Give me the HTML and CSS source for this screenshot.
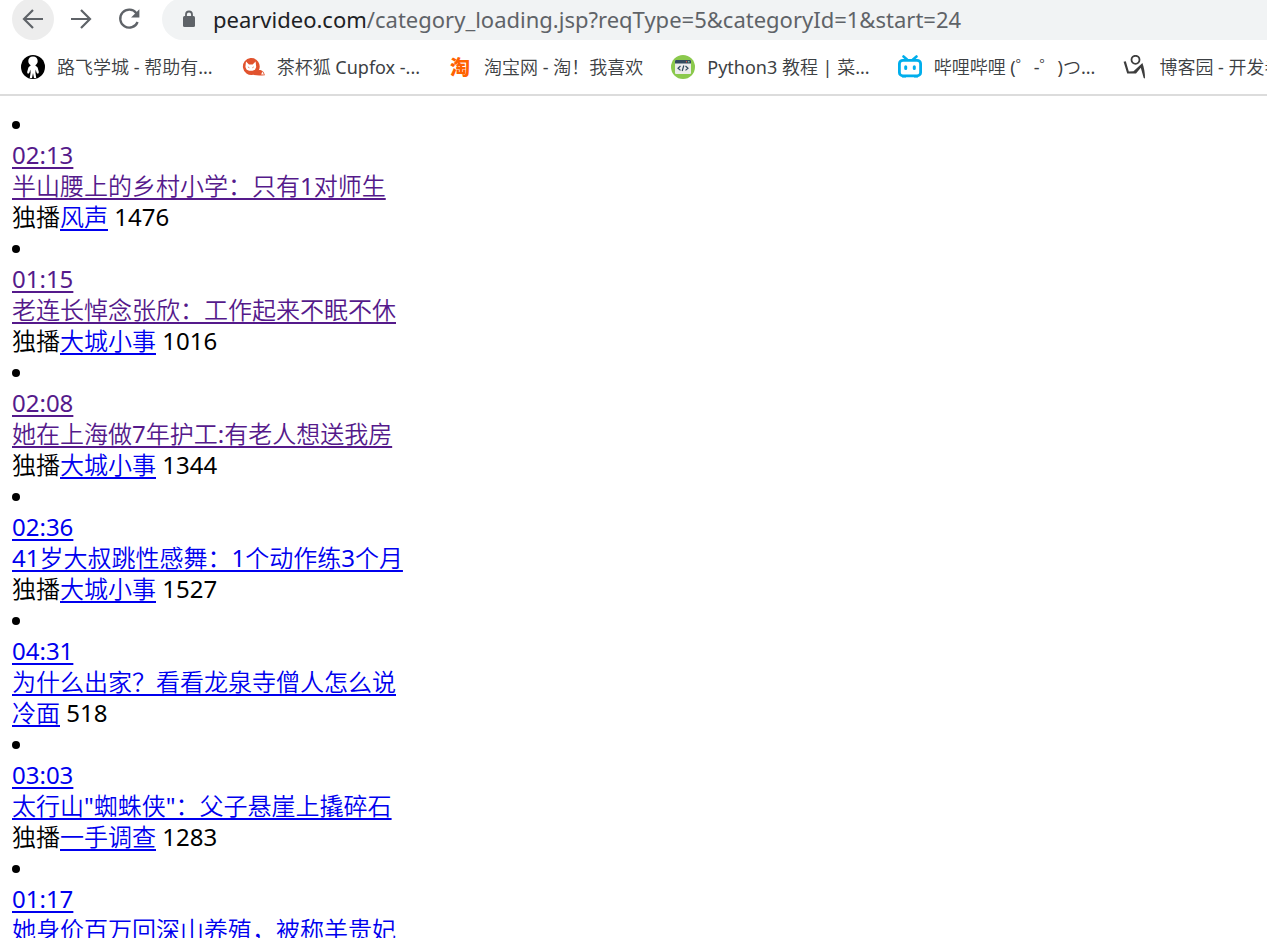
FILE: index.html
```
<!DOCTYPE html>
<html lang="zh-CN">
<head>
<meta charset="utf-8">
<title>pearvideo.com</title>
<link rel="stylesheet" href="styles.css">
</head>
<body>
<header class="browser">
  <div class="toolbar">
    <button class="nav-button nav-button-active" type="button" aria-label="后退">
      <svg width="24" height="24" viewBox="0 0 24 24"><path d="M22 12H3M12 3l-9 9 9 9" fill="none" stroke="#5f6368" stroke-width="2.2"/></svg>
    </button>
    <button class="nav-button" type="button" aria-label="前进">
      <svg width="24" height="24" viewBox="0 0 24 24"><path d="M2 12h19M12 3l9 9-9 9" fill="none" stroke="#5f6368" stroke-width="2.2"/></svg>
    </button>
    <button class="nav-button" type="button" aria-label="重新加载">
      <svg width="24" height="24" viewBox="0 0 24 24"><path d="M19.4 6.2A9 9 0 1 0 20.6 15" fill="none" stroke="#5f6368" stroke-width="2.3"/><path d="M22.4 2.200v8.300h-8.300z" fill="#5f6368"/></svg>
    </button>
    <div class="address">
      <svg class="lock" width="14" height="18" viewBox="0 0 14 18"><rect x="1" y="6" width="12" height="11" rx="1.500" fill="#5f6368"/><path d="M4 7V4.500a3 3 0 0 1 6 0V7" fill="none" stroke="#5f6368" stroke-width="1.800"/></svg>
      <div class="url" role="textbox" contenteditable="true" spellcheck="false" aria-label="地址栏"><span class="host">pearvideo.com</span>/category_loading.jsp?reqType=5&amp;categoryId=1&amp;start=24</div>
    </div>
  </div>
  <nav class="bookmarks" aria-label="书签">
    <a class="bookmark" href="#">
      <svg class="icon" viewBox="0 0 24 24"><circle cx="12" cy="12" r="12" fill="#000"/><path d="M12 1.500c3 0 4.700 2 4.700 4.500 0 2-1 3.600-2.500 4.200l2.400 2.300 1.300 4.700-.9 1.800-1.500-1.500-.8-3-.3 3 .8 5.500H13l-1-5-1 5H8.800l.8-5.500-.3-3-.8 3L7 19l-.9-1.800 1.300-4.700 2.400-2.300C8.300 9.600 7.300 8 7.300 6c0-2.500 1.700-4.500 4.700-4.500z" fill="#fff"/></svg>
      <span>路飞学城 - 帮助有...</span>
    </a>
    <a class="bookmark" href="#">
      <svg class="icon" viewBox="0 0 24 24"><path d="M9.500 3a8.500 8.500 0 1 0 2.500 16.800c3 1 7.500.8 11.900.5-.5-2.600-2.200-4.800-4.400-5.300-.8-.1-1.300 0-1.700.2A8.500 8.500 0 0 0 9.500 3z" fill="#e1532e"/><path d="M5 6.500l3 3h3.600l3-3 .6 5.500-1.200 2.700-2.500 1H8.200l-2.500-1L4.400 12z" fill="#fff"/><path d="M6.900 11.900l1.500.9M12.800 11.900l-1.500.9" stroke="#e1532e" stroke-width=".7"/><path d="M21.300 16.600l1.700 2.800-2.800.1z" fill="#fff"/></svg>
      <span>茶杯狐 Cupfox -...</span>
    </a>
    <a class="bookmark" href="#">
      <span class="icon taobao" aria-hidden="true">淘</span>
      <span>淘宝网 - 淘！我喜欢</span>
    </a>
    <a class="bookmark" href="#">
      <svg class="icon" viewBox="0 0 24 24"><circle cx="12" cy="12" r="12" fill="#8bc94d"/><rect x="4" y="5" width="16" height="14" rx="1" fill="#ececec"/><path d="M4 8.500V6a1 1 0 0 1 1-1h14a1 1 0 0 1 1 1v2.500z" fill="#324a5e"/><circle cx="15.500" cy="6.700" r=".7" fill="#f1543f"/><circle cx="17.800" cy="6.700" r=".7" fill="#90dfaa"/><path d="M9.500 11L7 13.200l2.500 2.200M14.500 11l2.500 2.200-2.500 2.200M12.800 10.500l-1.600 5.500" fill="none" stroke="#324a5e" stroke-width="1.200"/></svg>
      <span>Python3 教程 | 菜...</span>
    </a>
    <a class="bookmark" href="#">
      <svg class="icon" viewBox="0 0 24 24"><rect x="1.400" y="5.300" width="21.200" height="15.600" rx="3.500" fill="none" stroke="#00aeec" stroke-width="2.800"/><path d="M5.500 1.500l3.500 3M18.500 1.500l-3.500 3" stroke="#00aeec" stroke-width="2.600" stroke-linecap="round"/><path d="M7.700 11.800v1.800M16.300 11.800v1.800" stroke="#00aeec" stroke-width="3" stroke-linecap="round"/><path d="M4 21h4v1.500H4zM16 21h4v1.500h-4z" fill="#00aeec"/></svg>
      <span>哔哩哔哩 (゜-゜)つ...</span>
    </a>
    <a class="bookmark" href="#">
      <svg class="icon" viewBox="0 0 24 24"><circle cx="12.500" cy="4.800" r="4" fill="none" stroke="#3d3d3d" stroke-width="1.800"/><path d="M.6 6.800l2.200-.6 3 10.300 4.700-.3 6.500-6 2.400-2.200c1.600 4.500 2.800 10.500 2.600 15.600l-1.300-.6-2.900-10.300-4.800 5.800H4.200z" fill="#3d3d3d"/></svg>
      <span>博客园 - 开发者...</span>
    </a>
  </nav>
</header>
<main>
  <ul class="videos">
    <li><a class="visited" href="#"><span>02:13</span><span>半山腰上的乡村小学：只有1对师生</span></a><div>独播<a href="#">风声</a> 1476</div></li>
    <li><a class="visited" href="#"><span>01:15</span><span>老连长悼念张欣：工作起来不眠不休</span></a><div>独播<a href="#">大城小事</a> 1016</div></li>
    <li><a class="visited" href="#"><span>02:08</span><span>她在上海做7年护工:有老人想送我房</span></a><div>独播<a href="#">大城小事</a> 1344</div></li>
    <li><a href="#"><span>02:36</span><span>41岁大叔跳性感舞：1个动作练3个月</span></a><div>独播<a href="#">大城小事</a> 1527</div></li>
    <li><a href="#"><span>04:31</span><span>为什么出家？看看龙泉寺僧人怎么说</span></a><div><a href="#">冷面</a> 518</div></li>
    <li><a href="#"><span>03:03</span><span>太行山"蜘蛛侠"：父子悬崖上撬碎石</span></a><div>独播<a href="#">一手调查</a> 1283</div></li>
    <li><a href="#"><span>01:17</span><span>她身价百万回深山养殖，被称羊贵妃</span></a></li>
  </ul>
</main>
</body>
</html>
```
FILE: styles.css
```
body {
  margin: 0;
  height: 100vh;
  overflow: hidden;
  display: flex;
  flex-direction: column;
  background: #fff;
  color: #000;
  font-family: "Noto Sans", "Noto Sans CJK SC DemiLight", "Noto Sans CJK SC", sans-serif;
}

.browser {
  flex: none;
  border-bottom: 2px solid #dcdcdc;
}

.toolbar {
  display: flex;
  align-items: flex-end;
  gap: 6px;
  height: 40px;
  padding-left: 12px;
  overflow: hidden;
}

.nav-button {
  display: grid;
  place-items: center;
  flex: none;
  width: 42px;
  height: 42px;
  padding: 0;
  border: 0;
  border-radius: 50%;
  background: none;
}

.nav-button-active {
  background: #ededed;
}

.address {
  display: flex;
  align-items: center;
  gap: 17px;
  flex: 1;
  height: 42px;
  margin-left: 6px;
  padding-left: 20px;
  border-radius: 21px 0 0 21px;
  background: #f1f3f4;
}

.lock {
  flex: none;
}

.url {
  flex: 1;
  color: #5f6368;
  font-size: 22px;
  line-height: 30px;
  white-space: nowrap;
  outline: none;
}

.host {
  color: #202124;
}

.bookmarks {
  display: flex;
  align-items: center;
  gap: 28px;
  height: 54px;
  padding-left: 21px;
  overflow: hidden;
}

.bookmark {
  display: flex;
  align-items: center;
  gap: 12px;
  flex: none;
  color: #3c4043;
  font-size: 18px;
  line-height: 28px;
  text-decoration: none;
  white-space: nowrap;
}

.icon {
  flex: none;
  width: 24px;
  height: 24px;
}

.taobao {
  color: #ff6200;
  font-family: "Noto Sans CJK SC", sans-serif;
  font-size: 20px;
  font-weight: 900;
  line-height: 24px;
  text-align: center;
}

.videos {
  margin: 0;
  padding: 12px 12px 0;
  list-style: none;
  font-size: 24px;
  line-height: 31px;
}

.videos li::before {
  content: "";
  display: block;
  width: 8px;
  height: 8px;
  margin-bottom: 10px;
  border-radius: 50%;
  background: #000;
}

.videos li {
  padding-top: 13px;
}

.videos a {
  color: #0000ee;
  text-decoration: underline;
  text-decoration-thickness: 2px;
  text-underline-offset: 3px;
}

.videos .visited {
  color: #551a8b;
}

.videos a span {
  display: block;
}
```
